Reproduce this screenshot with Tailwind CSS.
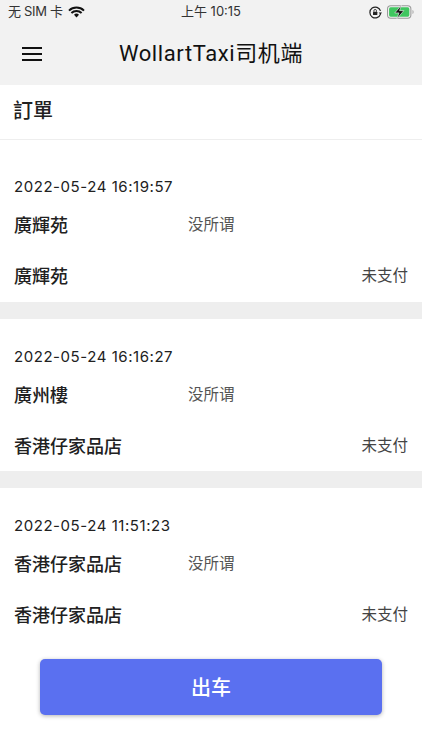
<!DOCTYPE html>
<html lang="zh-Hant"><head><meta charset="utf-8">
<script src="https://cdn.jsdelivr.net/npm/@tailwindcss/browser@4"></script>
</head>
<body class="bg-white">
<div class="w-[422px] h-[750px] overflow-hidden relative bg-white text-[#212121] font-['Roboto','Noto_Sans_CJK_SC',sans-serif]">
  <div class="bg-[#f2f2f2] h-[85px] flex flex-col">
    <div class="h-[24px] grid grid-cols-3 items-center px-2 text-[13px] text-[#333] font-['Inter','Noto_Sans_CJK_SC',sans-serif]">
      <div class="flex items-center gap-[5px]"><span class="whitespace-nowrap tracking-[-0.3px]">无 SIM 卡</span>
        <svg width="17" height="12" viewBox="0 0 17 12"><path d="M8.5 11.5 6 8.8a3.6 3.6 0 0 1 5 0z" fill="#111"/><path d="M1 4.6a10.8 10.8 0 0 1 15 0M3.4 7a7.4 7.4 0 0 1 10.2 0" fill="none" stroke="#111" stroke-width="2"/></svg>
      </div>
      <div class="text-center whitespace-nowrap">上午 10:15</div>
      <div class="flex items-center justify-end gap-[5px] pr-0">
        <svg width="13" height="13" viewBox="0 0 12 12"><path d="M10.6 4.5A5 5 0 1 0 10.6 7.5" fill="none" stroke="#222" stroke-width="1.1"/><path d="M9 6 12 6 10.5 8z" fill="#222"/><rect x="3.7" y="5.3" width="4" height="3" rx=".5" fill="#222"/><path d="M4.5 5.3V4.4a1.2 1.2 0 0 1 2.4 0v.9" fill="none" stroke="#222" stroke-width=".8"/></svg>
        <svg width="27" height="14" viewBox="0 0 26 13"><rect x=".5" y=".5" width="22.5" height="12" rx="3" fill="none" stroke="#999"/><rect x="2" y="2" width="19.5" height="9" rx="1.5" fill="#3fc65f"/><path d="M24.4 4.5c1 .3 1.4 1 1.4 2s-.4 1.7-1.4 2z" fill="#bbb"/><path d="M13.8 0 7.5 7.4h4L9.6 13l6.6-7.8h-4.1z" fill="#111" stroke="#f2f2f2" stroke-width=".6"/></svg>
      </div>
    </div>
    <div class="flex-1 flex items-center relative pb-[2px]">
      <div class="ml-[22px] w-[20px] flex flex-col gap-[4px]">
        <span class="h-[2px] bg-[#111]"></span><span class="h-[2px] bg-[#111]"></span><span class="h-[2px] bg-[#111]"></span>
      </div>
      <div class="absolute left-0 right-0 top-[13px] text-center text-[22px] tracking-[0.6px] text-[#111]">WollartTaxi司机端</div>
    </div>
  </div>

  <div class="h-[55px] border-b border-[#eee] px-[13px] flex items-center text-[20px] font-medium pb-[2px]">訂單</div>

  <div class="pt-[10px]">
    <section class="h-[152px] px-[14px] pt-[27px] flex flex-col">
      <div class="text-[15px] leading-[20px] tracking-[0.55px] font-['Inter']">2022-05-24 16:19:57</div>
      <div class="mt-[16px] flex items-center h-[24px]"><span class="w-[174px] text-[18px] font-medium">廣輝苑</span><span class="text-[15.5px] text-[#555] translate-y-[1px]">没所谓</span></div>
      <div class="mt-[27px] flex items-center justify-between h-[24px]"><span class="text-[18px] font-medium">廣輝苑</span><span class="text-[15.5px] text-[#444] translate-y-[1px]">未支付</span></div>
    </section>
    <div class="h-[17px] bg-[#eeeeee]"></div>
    <section class="h-[152px] px-[14px] pt-[28px] flex flex-col">
      <div class="text-[15px] leading-[20px] tracking-[0.55px] font-['Inter']">2022-05-24 16:16:27</div>
      <div class="mt-[16px] flex items-center h-[24px]"><span class="w-[174px] text-[18px] font-medium">廣州樓</span><span class="text-[15.5px] text-[#555] translate-y-[1px]">没所谓</span></div>
      <div class="mt-[27px] flex items-center justify-between h-[24px]"><span class="text-[18px] font-medium">香港仔家品店</span><span class="text-[15.5px] text-[#444] translate-y-[1px]">未支付</span></div>
    </section>
    <div class="h-[17px] bg-[#eeeeee]"></div>
    <section class="h-[152px] px-[14px] pt-[28px] flex flex-col">
      <div class="text-[15px] leading-[20px] tracking-[0.55px] font-['Inter']">2022-05-24 11:51:23</div>
      <div class="mt-[16px] flex items-center h-[24px]"><span class="w-[174px] text-[18px] font-medium">香港仔家品店</span><span class="text-[15.5px] text-[#555] translate-y-[1px]">没所谓</span></div>
      <div class="mt-[27px] flex items-center justify-between h-[24px]"><span class="text-[18px] font-medium">香港仔家品店</span><span class="text-[15.5px] text-[#444] translate-y-[1px]">未支付</span></div>
    </section>
  </div>

  <button class="absolute left-[40px] top-[659px] w-[342px] h-[56px] pt-[2px] rounded-[5px] bg-[#5a70f0] text-white text-[20px] font-medium shadow-[0_1px_4px_rgba(0,0,0,0.3)]">出车</button>
</div>
</body></html>
